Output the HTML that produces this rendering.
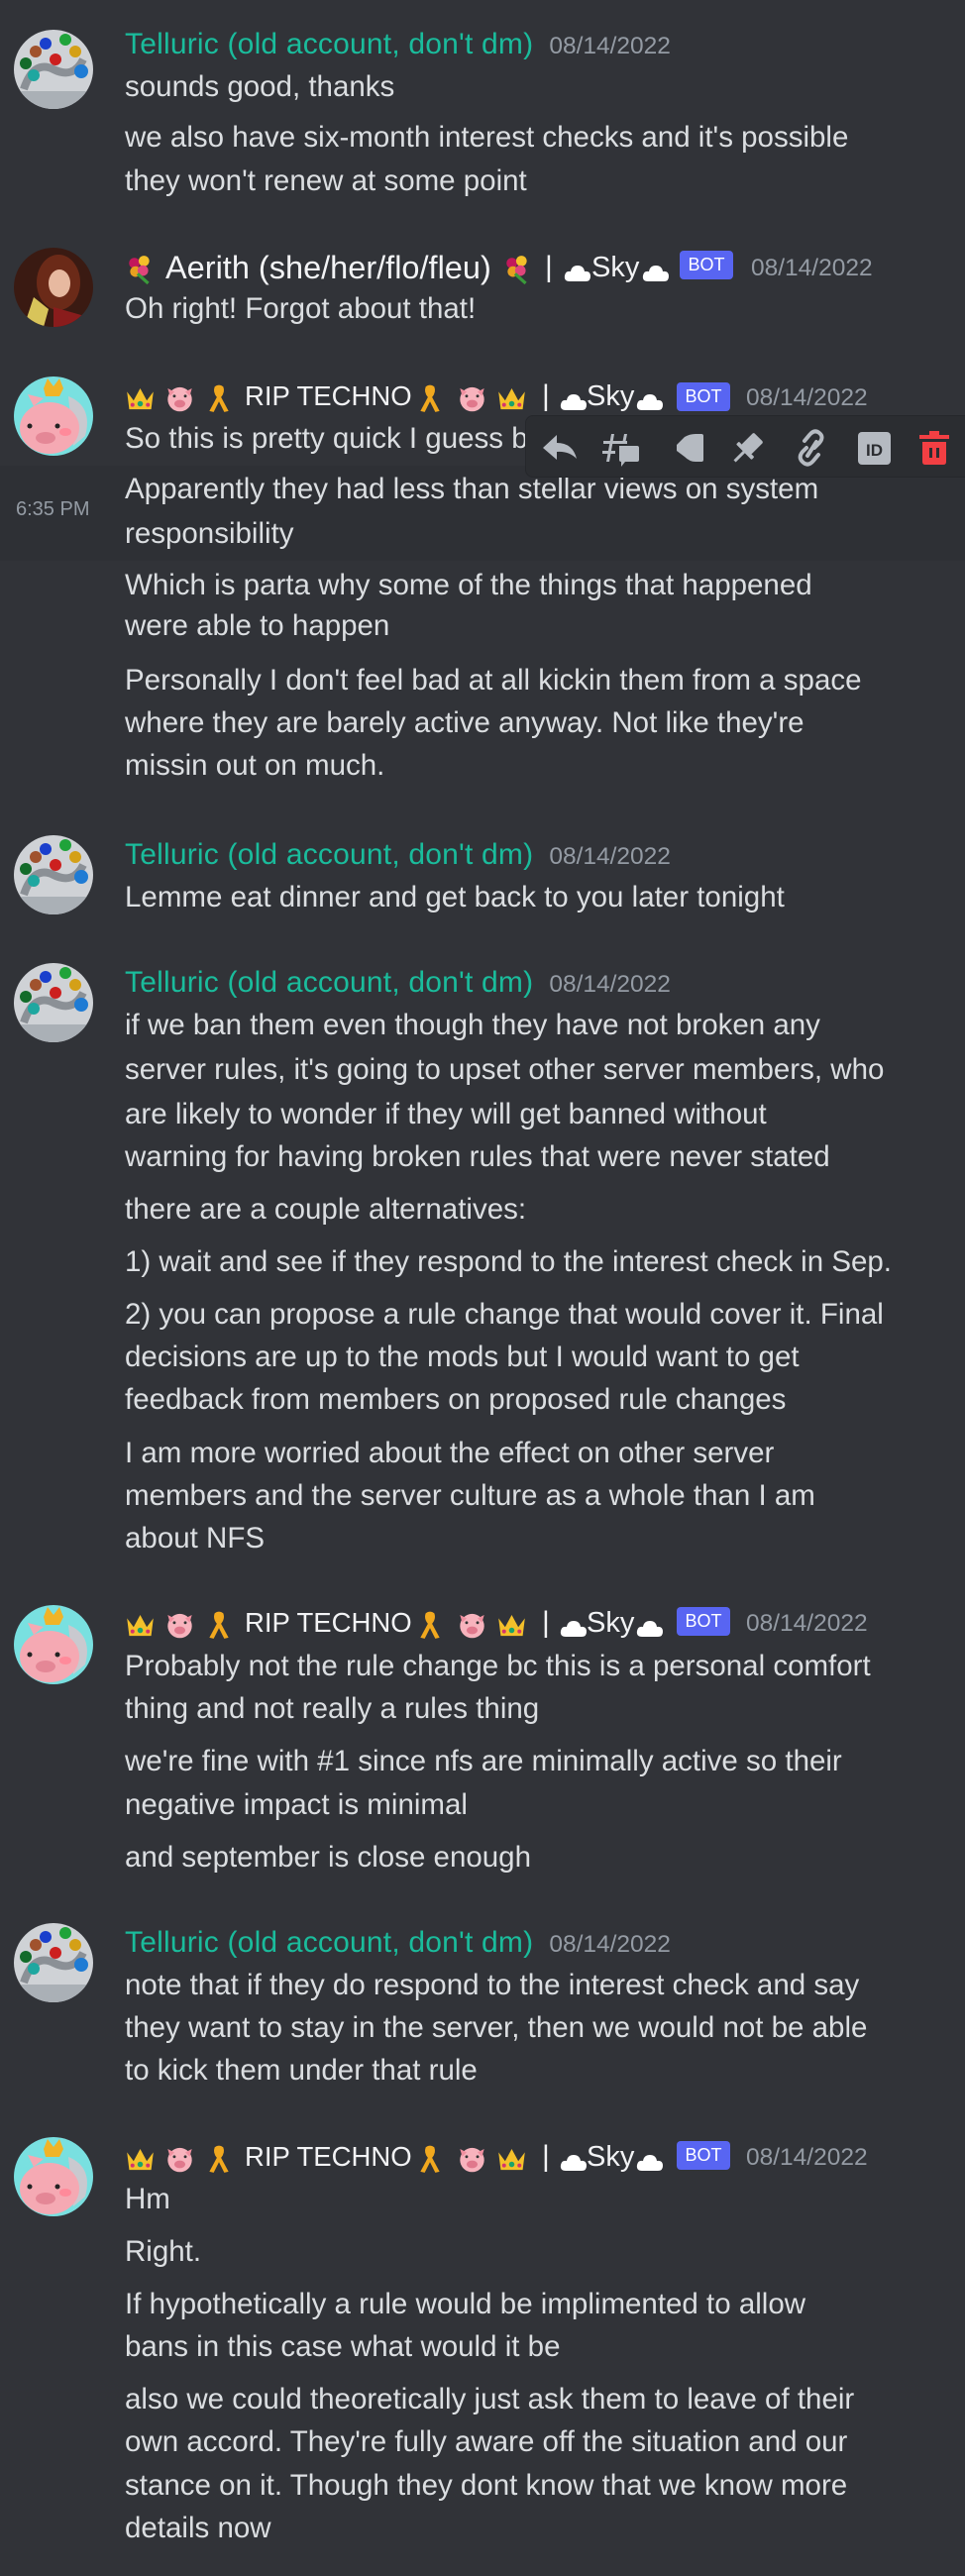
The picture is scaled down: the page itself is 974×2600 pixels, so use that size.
<!DOCTYPE html>
<html><head><meta charset="utf-8"><style>
html,body{margin:0;padding:0}
body{width:974px;height:2600px;background:#313338;position:relative;overflow:hidden;font-family:"Liberation Sans","DejaVu Sans",sans-serif}
.l{position:absolute;left:126px;height:34px;line-height:34px;font-size:29.5px;color:#dbdee1;white-space:nowrap;margin-top:-2px}
.h{position:absolute;left:126px;height:34px;line-height:34px;font-size:30px;color:#f2f3f5;white-space:nowrap;margin-top:-2px;letter-spacing:0.2px}
.t{color:#1abc9c}
.d{font-size:24.5px;color:#949ba4;margin-left:16px;letter-spacing:0}
.bot{position:absolute;background:#5865f2;color:#fff;font-size:18px;line-height:29px;height:29px;width:54px;text-align:center;border-radius:4px}
.dt{position:absolute;font-size:24.5px;color:#949ba4;line-height:30px}
.av{position:absolute;left:14px;width:80px;height:80px;border-radius:50%;overflow:hidden}
.hr{position:absolute;left:0;width:974px;height:34px}
.p{position:absolute;top:0;height:34px;line-height:34px;color:#f2f3f5;white-space:nowrap}
svg.p{top:2px}
</style></head><body>

<div style="position:absolute;left:0;top:470px;width:974px;height:96px;background:#2e3035"></div>
<div style="position:absolute;left:16px;top:503px;font-size:20px;color:#949ba4">6:35 PM</div>

<svg width="0" height="0" style="position:absolute">
<defs>
<symbol id="tel" viewBox="0 0 80 80"><rect width="80" height="80" fill="#cfd2d6"/><path d="M10 60 Q20 30 40 40 Q60 50 70 30" stroke="#8b9096" stroke-width="8" fill="none"/><rect x="5" y="62" width="70" height="18" fill="#aab0b6"/><circle cx="22" cy="22" r="6" fill="#a0522d"/><circle cx="32" cy="14" r="6" fill="#1a3fcc"/><circle cx="52" cy="10" r="6" fill="#1fa33a"/><circle cx="12" cy="34" r="6" fill="#136b2a"/><circle cx="42" cy="30" r="6" fill="#cc1f1f"/><circle cx="62" cy="22" r="6" fill="#d4a017"/><circle cx="20" cy="46" r="6" fill="#1ea7a0"/><circle cx="68" cy="42" r="7" fill="#1e7bd4"/></symbol>
<symbol id="aer" viewBox="0 0 80 80"><rect width="80" height="80" fill="#3a1a12"/><ellipse cx="45" cy="35" rx="22" ry="28" fill="#6b2a18"/><ellipse cx="46" cy="36" rx="11" ry="14" fill="#e7b9a0"/><path d="M10 80 L20 50 L35 62 L30 80Z" fill="#d8c45a"/><path d="M40 60 L75 70 L75 80 L40 80Z" fill="#8a1c1c"/></symbol>
<symbol id="pig" viewBox="0 0 80 80"><rect width="80" height="80" fill="#79e0e0"/><path d="M55 20 Q80 30 72 60 L60 70Z" fill="#c9c9cf"/><ellipse cx="36" cy="52" rx="30" ry="26" fill="#f5a9b3"/><path d="M20 30 L14 18 L30 22Z" fill="#f5a9b3"/><path d="M30 12 L34 2 L40 10 L46 2 L50 12 L46 20 L32 20Z" fill="#f0b428"/><circle cx="16" cy="50" r="2.5" fill="#222"/><circle cx="44" cy="50" r="2.5" fill="#222"/><ellipse cx="32" cy="62" rx="10" ry="6" fill="#e48796"/><ellipse cx="52" cy="56" rx="6" ry="4" fill="#ff8a9a"/></symbol>
<symbol id="crown" viewBox="0 0 28 28"><path d="M2 8 L8 16 L14 5 L20 16 L26 8 L24 24 L4 24Z" fill="#f4c02a"/><circle cx="14" cy="19" r="2.5" fill="#1aa36b"/><circle cx="7" cy="20" r="1.8" fill="#d6336c"/><circle cx="21" cy="20" r="1.8" fill="#d6336c"/></symbol>
<symbol id="pg" viewBox="0 0 28 28"><circle cx="14" cy="15" r="11" fill="#f7b3bd"/><path d="M3 5 L9 8 L5 12Z M25 5 L19 8 L23 12Z" fill="#f090a0"/><ellipse cx="14" cy="19" rx="5" ry="3.5" fill="#e0788c"/><circle cx="9" cy="12" r="1.3" fill="#333"/><circle cx="19" cy="12" r="1.3" fill="#333"/></symbol>
<symbol id="rib" viewBox="0 0 28 28"><path d="M10 3 Q14 0 18 3 Q20 8 16 13 L23 26 L19 27 L14 17 L9 27 L5 26 L12 13 Q8 8 10 3Z" fill="#f1a81e"/></symbol>
<symbol id="bq" viewBox="0 0 28 28"><circle cx="9" cy="8" r="5" fill="#c2185b"/><circle cx="18" cy="6" r="5" fill="#f4c02a"/><circle cx="10" cy="16" r="5" fill="#e8a020"/><circle cx="17" cy="15" r="5" fill="#e0457b"/><path d="M12 18 L22 27" stroke="#3a9a3a" stroke-width="3" fill="none"/></symbol>
<symbol id="cl" viewBox="0 0 28 20"><path d="M6 18 Q0 18 1 12 Q2 7 7 8 Q8 2 14 2 Q20 2 21 8 Q27 7 27 13 Q27 18 22 18Z" fill="#fff"/></symbol>
<symbol id="riph" viewBox="0 0 974 34">
</symbol>
</defs></svg>

<!-- Msg 1 -->
<svg class="av" style="top:30px"><use href="#tel"/></svg>
<div class="h" style="top:30px"><span class="t">Telluric (old account, don't dm)</span><span class="d">08/14/2022</span></div>
<div class="l" style="top:73px">sounds good, thanks</div>
<div class="l" style="top:124px">we also have six-month interest checks and it's possible</div>
<div class="l" style="top:168px">they won't renew at some point</div>

<!-- Msg 2 -->
<svg class="av" style="top:250px"><use href="#aer"/></svg>
<div class="hr" style="top:253px">
<svg class="p" style="left:126px" width="30" height="30"><use href="#bq"/></svg>
<span class="p" style="left:167px;font-size:32.5px">Aerith (she/her/flo/fleu)</span>
<svg class="p" style="left:507px" width="30" height="30"><use href="#bq"/></svg>
<span class="p" style="left:550px;font-size:30px">|</span>
<svg class="p" style="left:569px;top:6px" width="28" height="20"><use href="#cl"/></svg>
<span class="p" style="left:597px;font-size:29px">Sky</span>
<svg class="p" style="left:648px;top:6px" width="28" height="20"><use href="#cl"/></svg>
</div>
<div class="bot" style="left:686px;top:253px">BOT</div>
<div class="dt" style="left:758px;top:256px">08/14/2022</div>
<div class="l" style="top:297px">Oh right! Forgot about that!</div>

<!-- Msg 3 -->
<svg class="av" style="top:380px"><use href="#pig"/></svg>
<div class="hr" style="top:383px">
<svg class="p" style="left:126px" width="31" height="31"><use href="#crown"/></svg>
<svg class="p" style="left:166px" width="31" height="31"><use href="#pg"/></svg>
<svg class="p" style="left:206px" width="30" height="30"><use href="#rib"/></svg>
<span class="p" style="left:247px;font-size:27.5px">RIP TECHNO</span>
<svg class="p" style="left:419px" width="30" height="30"><use href="#rib"/></svg>
<svg class="p" style="left:461px" width="31" height="31"><use href="#pg"/></svg>
<svg class="p" style="left:501px" width="31" height="31"><use href="#crown"/></svg>
<span class="p" style="left:547px;font-size:30px">|</span>
<svg class="p" style="left:565px;top:6px" width="28" height="20"><use href="#cl"/></svg>
<span class="p" style="left:592px;font-size:29px">Sky</span>
<svg class="p" style="left:642px;top:6px" width="28" height="20"><use href="#cl"/></svg>
</div>
<div class="bot" style="left:683px;top:386px">BOT</div>
<div class="dt" style="left:753px;top:387px">08/14/2022</div>
<div class="l" style="top:428px">So this is pretty quick I guess b</div>
<div class="l" style="top:479px">Apparently they had less than stellar views on system</div>
<div class="l" style="top:524px">responsibility</div>
<div class="l" style="top:576px">Which is parta why some of the things that happened</div>
<div class="l" style="top:617px">were able to happen</div>
<div class="l" style="top:672px">Personally I don't feel bad at all kickin them from a space</div>
<div class="l" style="top:715px">where they are barely active anyway. Not like they're</div>
<div class="l" style="top:758px">missin out on much.</div>

<!-- toolbar -->
<div style="position:absolute;left:530px;top:419px;width:460px;height:63px;background:#2b2d31;border:1px solid #25272b;border-radius:8px;box-sizing:border-box"></div>
<svg style="position:absolute;left:530px;top:419px" width="444" height="64" viewBox="0 0 444 64">
<g fill="#b5bac1">
<path d="M18 33 L32 20 L32 28 Q48 28 52 44 Q44 36 32 37 L32 45Z"/>
<g transform="translate(97,33)"><path d="M-10 -14 L-7 -14 L-12 14 L-15 14Z M3 -14 L6 -14 L4 -4 L1 -4Z M-18 -7 L6 -7 L6 -4 L-18 -4Z M-19 3 L-6 3 L-6 6 L-19 6Z"/><path d="M-2 -2 L16 -2 Q18 -2 18 0 L18 12 Q18 14 16 14 L4 14 L0 19 L0 14 Q-2 14 -2 12Z"/></g>
<path d="M161 22 Q166 19 172 19 L178 19 Q180 19 180 21 L180 45 Q180 47 178 47 L172 47 Q166 47 161 42 L153 36 L153 30Z"/>
<g transform="translate(225,33) rotate(45)"><rect x="-7" y="-15" width="14" height="18" rx="2"/><rect x="-11" y="2" width="22" height="4" rx="1"/><rect x="-1.5" y="5" width="3" height="14"/></g>
</g>
<g fill="none" stroke="#b5bac1" stroke-width="4" stroke-linecap="round"><path d="M284 33 L280 37 Q275 43 281 48 Q286 52 291 46 L296 40"/><path d="M292 33 L297 28 Q302 22 297 18 Q292 14 287 20 L282 26"/><path d="M285 41 L294 27"/></g>
<rect x="336" y="17" width="33" height="33" rx="4" fill="#b5bac1"/>
<text x="352.5" y="41" text-anchor="middle" font-family="Liberation Sans" font-weight="bold" font-size="17" fill="#2b2d31">ID</text>
<g fill="#f23f43"><rect x="398" y="20" width="30" height="4"/><rect x="408" y="16" width="10" height="4"/><path d="M401 27 L425 27 L425 47 Q425 50 422 50 L404 50 Q401 50 401 47Z"/></g>
<g fill="#2b2d31"><rect x="408" y="33" width="3" height="10"/><rect x="415" y="33" width="3" height="10"/></g>
</svg>

<!-- Msg 4 -->
<svg class="av" style="top:843px"><use href="#tel"/></svg>
<div class="h" style="top:848px"><span class="t">Telluric (old account, don't dm)</span><span class="d">08/14/2022</span></div>
<div class="l" style="top:891px">Lemme eat dinner and get back to you later tonight</div>

<!-- Msg 5 -->
<svg class="av" style="top:972px"><use href="#tel"/></svg>
<div class="h" style="top:977px"><span class="t">Telluric (old account, don't dm)</span><span class="d">08/14/2022</span></div>
<div class="l" style="top:1020px">if we ban them even though they have not broken any</div>
<div class="l" style="top:1065px">server rules, it's going to upset other server members, who</div>
<div class="l" style="top:1110px">are likely to wonder if they will get banned without</div>
<div class="l" style="top:1153px">warning for having broken rules that were never stated</div>
<div class="l" style="top:1206px">there are a couple alternatives:</div>
<div class="l" style="top:1259px">1) wait and see if they respond to the interest check in Sep.</div>
<div class="l" style="top:1312px">2) you can propose a rule change that would cover it. Final</div>
<div class="l" style="top:1355px">decisions are up to the mods but I would want to get</div>
<div class="l" style="top:1398px">feedback from members on proposed rule changes</div>
<div class="l" style="top:1452px">I am more worried about the effect on other server</div>
<div class="l" style="top:1495px">members and the server culture as a whole than I am</div>
<div class="l" style="top:1538px">about NFS</div>

<!-- Msg 6 -->
<svg class="av" style="top:1620px"><use href="#pig"/></svg>
<div class="hr" style="top:1621px">
<svg class="p" style="left:126px" width="31" height="31"><use href="#crown"/></svg>
<svg class="p" style="left:166px" width="31" height="31"><use href="#pg"/></svg>
<svg class="p" style="left:206px" width="30" height="30"><use href="#rib"/></svg>
<span class="p" style="left:247px;font-size:27.5px">RIP TECHNO</span>
<svg class="p" style="left:419px" width="30" height="30"><use href="#rib"/></svg>
<svg class="p" style="left:461px" width="31" height="31"><use href="#pg"/></svg>
<svg class="p" style="left:501px" width="31" height="31"><use href="#crown"/></svg>
<span class="p" style="left:547px;font-size:30px">|</span>
<svg class="p" style="left:565px;top:6px" width="28" height="20"><use href="#cl"/></svg>
<span class="p" style="left:592px;font-size:29px">Sky</span>
<svg class="p" style="left:642px;top:6px" width="28" height="20"><use href="#cl"/></svg>
</div>
<div class="bot" style="left:683px;top:1622px">BOT</div>
<div class="dt" style="left:753px;top:1624px">08/14/2022</div>
<div class="l" style="top:1667px">Probably not the rule change bc this is a personal comfort</div>
<div class="l" style="top:1710px">thing and not really a rules thing</div>
<div class="l" style="top:1763px">we're fine with #1 since nfs are minimally active so their</div>
<div class="l" style="top:1807px">negative impact is minimal</div>
<div class="l" style="top:1860px">and september is close enough</div>

<!-- Msg 7 -->
<svg class="av" style="top:1941px"><use href="#tel"/></svg>
<div class="h" style="top:1946px"><span class="t">Telluric (old account, don't dm)</span><span class="d">08/14/2022</span></div>
<div class="l" style="top:1989px">note that if they do respond to the interest check and say</div>
<div class="l" style="top:2032px">they want to stay in the server, then we would not be able</div>
<div class="l" style="top:2075px">to kick them under that rule</div>

<!-- Msg 8 -->
<svg class="av" style="top:2157px"><use href="#pig"/></svg>
<div class="hr" style="top:2160px">
<svg class="p" style="left:126px" width="31" height="31"><use href="#crown"/></svg>
<svg class="p" style="left:166px" width="31" height="31"><use href="#pg"/></svg>
<svg class="p" style="left:206px" width="30" height="30"><use href="#rib"/></svg>
<span class="p" style="left:247px;font-size:27.5px">RIP TECHNO</span>
<svg class="p" style="left:419px" width="30" height="30"><use href="#rib"/></svg>
<svg class="p" style="left:461px" width="31" height="31"><use href="#pg"/></svg>
<svg class="p" style="left:501px" width="31" height="31"><use href="#crown"/></svg>
<span class="p" style="left:547px;font-size:30px">|</span>
<svg class="p" style="left:565px;top:6px" width="28" height="20"><use href="#cl"/></svg>
<span class="p" style="left:592px;font-size:29px">Sky</span>
<svg class="p" style="left:642px;top:6px" width="28" height="20"><use href="#cl"/></svg>
</div>
<div class="bot" style="left:683px;top:2161px">BOT</div>
<div class="dt" style="left:753px;top:2163px">08/14/2022</div>
<div class="l" style="top:2205px">Hm</div>
<div class="l" style="top:2258px">Right.</div>
<div class="l" style="top:2311px">If hypothetically a rule would be implimented to allow</div>
<div class="l" style="top:2354px">bans in this case what would it be</div>
<div class="l" style="top:2407px">also we could theoretically just ask them to leave of their</div>
<div class="l" style="top:2450px">own accord. They're fully aware off the situation and our</div>
<div class="l" style="top:2494px">stance on it. Though they dont know that we know more</div>
<div class="l" style="top:2537px">details now</div>

</body></html>
